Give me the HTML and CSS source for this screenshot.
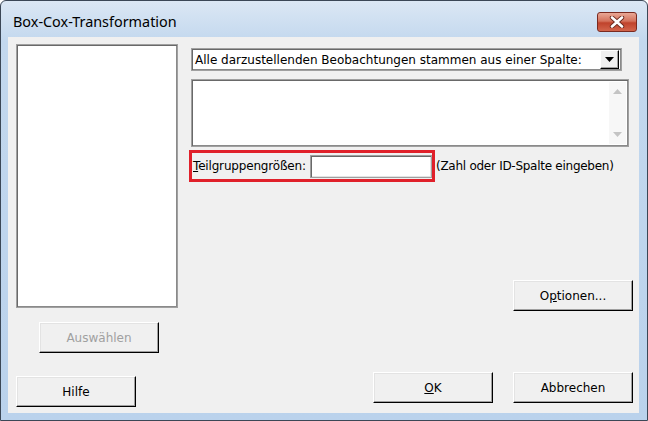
FILE: index.html
```html
<!DOCTYPE html>
<html lang="de">
<head>
    <meta charset="UTF-8">
    <title>Box-Cox-Transformation</title>
    <link rel="stylesheet" href="styles.css">
</head>
<body>
    <div class="window">
        <div class="titlebar">
            <span class="title">Box-Cox-Transformation</span>
            <span class="close-button">
                <svg width="16" height="12" viewBox="0 0 16 12">
                    <path d="M3 1.5 L13 10.5 M13 1.5 L3 10.5" stroke="#6b2a1e" stroke-width="4.4" stroke-linecap="round"/>
                    <path d="M3 1.5 L13 10.5 M13 1.5 L3 10.5" stroke="#fff" stroke-width="2.6" stroke-linecap="round"/>
                </svg>
            </span>
        </div>
        <div class="client">
            <div class="col-left">
                <div class="listbox"></div>
                <button class="btn btn-select" disabled>Auswählen</button>
                <button class="btn btn-help">Hilfe</button>
            </div>
            <div class="col-right">
                <div class="combo">
                    <span class="combo-text">Alle darzustellenden Beobachtungen stammen aus einer Spalte:</span>
                    <span class="combo-arrow">
                        <svg width="9" height="5" viewBox="0 0 9 5"><path d="M0 0 H9 L4.5 5 Z" fill="#000"/></svg>
                    </span>
                </div>
                <div class="memo">
                    <div class="scrollbar">
                        <svg width="9" height="5" viewBox="0 0 9 5"><path d="M0 5 H9 L4.5 0 Z" fill="#c4c4c4"/></svg>
                        <svg width="9" height="5" viewBox="0 0 9 5"><path d="M0 0 H9 L4.5 5 Z" fill="#c4c4c4"/></svg>
                    </div>
                </div>
                <div class="subgroup-row">
                    <div class="highlight">
                        <label class="field-label"><u>T</u>eilgruppengrößen:</label>
                        <span class="field"></span>
                    </div>
                    <span class="hint">(Zahl oder ID-Spalte eingeben)</span>
                </div>
                <div class="options-row">
                    <button class="btn">O<u>p</u>tionen...</button>
                </div>
                <div class="footer-row">
                    <button class="btn"><u>O</u>K</button>
                    <button class="btn">Abbrechen</button>
                </div>
            </div>
        </div>
    </div>
</body>
</html>
```

FILE: styles.css
```css
* {
    box-sizing: border-box;
}

body {
    margin: 0;
    background: #fff;
    font-family: "DejaVu Sans", sans-serif;
    font-size: 12px;
    color: #000;
}

.window {
    width: 648px;
    height: 421px;
    border: 1px solid #3b4756;
    border-radius: 6px 6px 0 0;
    background: linear-gradient(#dbe7f4, #c3d8ee 40px, #bad2ec);
    display: flex;
    flex-direction: column;
    padding: 0 8px 7px 7px;
}

.titlebar {
    height: 36px;
    display: flex;
    align-items: flex-start;
}

.title {
    font-family: "Noto Sans", sans-serif;
    font-size: 14.4px;
    line-height: 20px;
    margin: 11px 0 0 5px;
    color: #000;
}

.close-button {
    margin: 11px 2px 0 auto;
    width: 40px;
    height: 20px;
    border: 1px solid #7a2a20;
    border-radius: 3px;
    background: linear-gradient(#e9a795, #d4725c 45%, #c0432c 55%, #d2654c);
    display: flex;
    align-items: center;
    justify-content: center;
}

.client {
    flex: 1;
    background: #f0f0f0;
    display: flex;
    padding: 7px 6px 0 8px;
}

.col-left {
    display: flex;
    flex-direction: column;
    align-items: flex-start;
}

.listbox {
    width: 162px;
    height: 264px;
    background: #fff;
    border: 1px solid #a0a0a0;
    box-shadow: inset 1px 1px #696969, inset -1px -1px #8a8a8a;
}

.btn {
    width: 120px;
    height: 31px;
    padding: 0;
    background: #f0f0f0;
    border: 1px solid;
    border-color: #fff #000 #000 #fff;
    box-shadow: inset -1px -1px #a0a0a0, inset 1px 1px #e3e3e3;
    font-family: inherit;
    font-size: 12px;
    color: #000;
}

.btn-select {
    margin: 14px 0 0 23px;
    color: #a0a0a0;
}

.btn-help {
    margin-top: 23px;
}

.col-right {
    flex: 1;
    margin-left: 13px;
    display: flex;
    flex-direction: column;
}

.combo {
    margin-top: 4px;
    width: 431px;
    height: 23px;
    background: #fff;
    border: 1px solid #a0a0a0;
    box-shadow: inset 1px 1px #696969, inset -1px -1px #8a8a8a;
    display: flex;
    align-items: center;
    padding: 2px;
}

.combo-text {
    flex: 1;
    padding-left: 1px;
}

.combo-arrow {
    width: 19px;
    height: 19px;
    background: #f0f0f0;
    border: 1px solid;
    border-color: #fff #000 #000 #fff;
    box-shadow: inset -1px -1px #a0a0a0;
    display: flex;
    align-items: center;
    justify-content: center;
}

.memo {
    margin-top: 8px;
    width: 438px;
    height: 68px;
    background: #fff;
    border: 1px solid #a0a0a0;
    box-shadow: inset 1px 1px #696969, inset -1px -1px #8a8a8a;
    display: flex;
    justify-content: flex-end;
    padding: 2px;
}

.scrollbar {
    width: 17px;
    background: #f7f7f7;
    display: flex;
    flex-direction: column;
    align-items: center;
    justify-content: space-between;
    padding: 7px 0 7px;
}

.subgroup-row {
    margin: 3px 0 0 -2px;
    display: flex;
    align-items: center;
}

.highlight {
    width: 246px;
    height: 32px;
    border: 3px solid #e0202a;
    display: flex;
    align-items: center;
    padding-left: 1px;
}

.field-label {
    letter-spacing: -0.17px;
}

.field {
    margin-left: auto;
    width: 122px;
    height: 23px;
    background: #fff;
    border: 1px solid #a0a0a0;
    box-shadow: inset 1px 1px #696969, inset -1px -1px #e3e3e3;
}

.hint {
    margin-left: 1px;
    letter-spacing: -0.27px;
}

.options-row {
    margin-top: 98px;
    display: flex;
    justify-content: flex-end;
}

.footer-row {
    margin-top: 61px;
    display: flex;
    justify-content: flex-end;
    gap: 20px;
}
```
